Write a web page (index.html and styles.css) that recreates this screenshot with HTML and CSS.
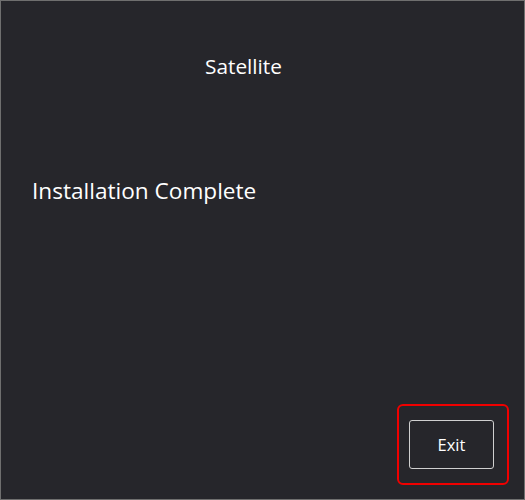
FILE: index.html
```html
<!DOCTYPE html>
<html lang="en">
<head>
  <meta charset="UTF-8" />
  <title>Satellite</title>
  <link rel="stylesheet" href="styles.css">
</head>
<body>
  <div class="window">
    <header class="title-bar">Satellite</header>
    <main class="content">
      <h1 class="status">Installation Complete</h1>
    </main>
    <footer class="actions">
      <div class="focus-ring">
        <button class="btn">Exit</button>
      </div>
    </footer>
  </div>
</body>
</html>
```

FILE: styles.css
```css
* {margin:0; padding:0; box-sizing:border-box;}
body {font-family: "Open Sans", "Noto Sans", sans-serif; background: #26262b;}

.window {
  width: 525px;
  height: 500px;
  border: 1px solid #6f6f6f;
  background: #26262b;
  color: #fff;
  display: flex;
  flex-direction: column;
}

.title-bar {
  text-align: center;
  font-size: 20.8px;
  padding: 50px 38px 0 0;
  line-height: 30px;
}

.content {
  flex: 1;
  padding: 95px 0 0 31px;
}

.status {
  font-size: 22.6px;
  font-weight: normal;
  line-height: 30px;
}

.actions {
  display: flex;
  justify-content: flex-end;
  padding: 0 15px 14px 0;
}

.focus-ring {
  border: 2px solid #f00000;
  border-radius: 6px;
  padding: 14px 13px 14px 10px;
}

.btn {
  display: block;
  width: 85px;
  height: 49px;
  background: transparent;
  color: #fff;
  font-family: inherit;
  font-size: 16.5px;
  border: 1px solid #d0d0d0;
  border-radius: 3px;
}
```
